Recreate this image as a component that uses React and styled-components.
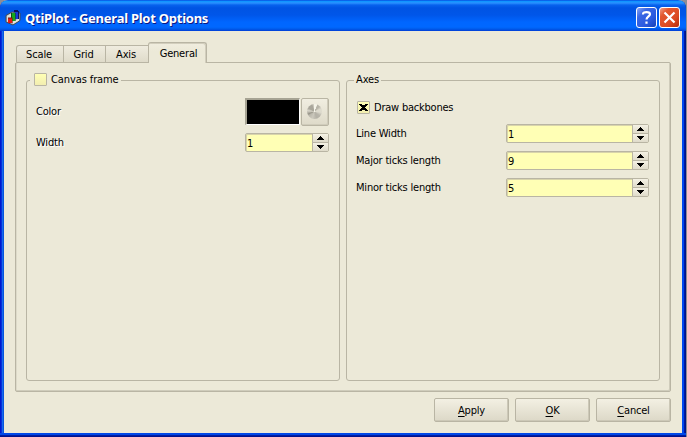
import React from 'react';
import styled, { createGlobalStyle, css } from 'styled-components';

const LINE = '#b9b5a4';

const GlobalStyle = createGlobalStyle`
  * { box-sizing: border-box; }
  body { margin: 0; background: #8e8d96; overflow: hidden; }
  button, input { font: inherit; color: inherit; }
`;

const Window = styled.div`
  width: 686px;
  height: 437px;
  display: flex;
  flex-direction: column;
  border-radius: 8px 8px 0 0;
  overflow: hidden;
  background: linear-gradient(90deg, #0019cf 0 1px, #0831d9 1px 2px, #166aee 2px 3px, #0855dd 3px 4px, transparent 4px calc(100% - 4px), #0048f1 calc(100% - 4px) calc(100% - 2px), #001ba0 calc(100% - 2px) calc(100% - 1px), #00138c calc(100% - 1px)), #ece9d8;
  color: #000;
  font: 11px/14px 'DejaVu Sans Condensed', 'DejaVu Sans', sans-serif;
  font-stretch: condensed;
`;

const TitleBar = styled.header`
  height: 31px;
  flex: none;
  display: flex;
  align-items: center;
  padding: 4px 6px 0 5px;
  background: linear-gradient(180deg, #0831d9 0, #0997ff 1px, #2a90ff 3px, #0762ee 5px, #0054e3 8px, #0056e9 15px, #0066ff 22px, #0068ff 27px, #005bea 29px, #003dd7 31px);
`;

const Title = styled.h1`
  flex: 1;
  margin: 0 0 0 4px;
  color: #fff;
  font: bold 13px/18px 'Noto Sans', sans-serif;
  font-stretch: normal;
  letter-spacing: -0.25px;
  text-shadow: 1px 1px 0 #0a1883;
  white-space: nowrap;
`;

const CaptionButton = styled.button`
  width: 21px;
  height: 21px;
  margin: 0 0 0 2px;
  padding: 0;
  border: 1px solid #fff;
  border-radius: 3px;
  display: grid;
  place-items: center;
  background: ${p => p.$close
    ? 'linear-gradient(135deg, #f0a08b 0, #e2582f 25%, #dc4b22 65%, #b52c0d 100%)'
    : 'linear-gradient(135deg, #8aa6f5 0, #3a67e4 28%, #2b5be0 65%, #1742b8 100%)'};
  color: #fff;
`;

const Body = styled.main`
  flex: 1;
  padding: 11px 11px 0 11px;
  margin: 0 4px;
`;

const Tabs = styled.nav`
  height: 21px;
  margin-bottom: -1px;
  padding-left: 1px;
  display: flex;
  align-items: flex-end;
`;

const Tab = styled.button`
  width: ${p => p.$width}px;
  height: 17px;
  margin: 0 0 1px;
  padding: 1px 2px 0 0;
  border: 1px solid ${LINE};
  border-left-width: ${p => (p.$first ? 1 : 0)}px;
  border-bottom: 0;
  border-radius: ${p => (p.$first ? '3px 0 0 0' : '0')};
  background: linear-gradient(#efecdf, #dfdbca);
  letter-spacing: -0.15px;
  ${p => p.$active && css`
    height: 21px;
    margin: 0 0 0 -1px;
    padding: 1px 0 0 2px;
    letter-spacing: -0.2px;
    border: 1px solid ${LINE};
    border-bottom: 0;
    border-radius: 3px 3px 0 0;
    box-shadow: inset -1px 1px 0 #d2cebd;
    background: linear-gradient(#f0eddf, #ece9d8 8px);
  `}
`;

const Pane = styled.section`
  width: 656px;
  height: 330px;
  padding: 10px;
  border: 1px solid ${LINE};
  border-radius: 2px;
  box-shadow: inset -1px -1px 0 #cfccbb, inset 1px 0 0 #dddac9;
  display: grid;
  grid-template-columns: 314px 314px;
  column-gap: 6px;
`;

const Group = styled.fieldset`
  min-width: 0;
  height: 308px;
  margin: 0;
  padding: 0;
  border: 1px solid ${LINE};
  border-radius: 3px;
`;

const GroupTitle = styled.legend`
  height: 14px;
  margin-left: ${p => p.$inset}px;
  padding: 0 2px 0 ${p => p.$lead}px;
  display: flex;
  align-items: center;
  gap: 4px;
  letter-spacing: -0.1px;
`;

const Rows = styled.div`
  padding: 11px 10px 0 9px;
  display: flex;
  flex-direction: column;
  gap: 8px;
`;

const Row = styled.div`
  height: 19px;
  display: flex;
  align-items: center;
  justify-content: space-between;
  ${p => p.$color && css`
    height: 28px;
    margin-bottom: -1px;
  `}
  ${p => p.$check && css`
    margin-bottom: -1px;
  `}
`;

const Label = styled.span`
  white-space: nowrap;
  letter-spacing: -0.2px;
  ${p => p.$raised && css`
    text-shadow: 1px 1px 0 #fff;
  `}
`;

const CheckLabel = styled.label`
  display: flex;
  align-items: center;
  gap: 4px;
  padding-left: 1px;
  letter-spacing: -0.22px;
`;

const CheckBox = styled.span`
  width: 13px;
  height: 13px;
  border: 1px solid ${LINE};
  border-radius: 1px;
  display: grid;
  place-items: center;
  background: linear-gradient(#ffffb5, #f2eeb0);
`;

const LegendCheckBox = styled(CheckBox)`
  margin-top: -1px;
`;

const ColorControls = styled.div`
  display: flex;
  align-items: flex-start;
`;

const Swatch = styled.div`
  width: 55px;
  height: 27px;
  border: 2px solid;
  border-width: 2px 1px 1px 2px;
  border-color: #a6a393 #fff #fff #a6a393;
  background: #000;
  background-clip: padding-box;
`;

const Picker = styled.button`
  width: 28px;
  height: 28px;
  margin: 0 0 0 1px;
  padding: 0;
  border: 1px solid ${LINE};
  border-radius: 2px;
  box-shadow: inset -1px -1px 0 #d0ccbb;
  display: grid;
  place-items: center;
  background: linear-gradient(#f1eee1, #dedac9);
`;

const Wheel = styled.span`
  width: 15px;
  height: 15px;
  margin: -1px 0 0 -2px;
  border-radius: 50%;
  background: conic-gradient(#f5f4e9 0 5%, #b8b5a9 7% 12%, #dedbce 19% 27%, #b8b5aa 36%, #b5b2a7 45%, #cbc8bc 55%, #bab7ab 65%, #989589 69%, #dad7cb 77%, #a9a69a 83%, #aaa79c 94%, #e6e3d7);
`;

const Spin = styled.div`
  width: ${p => p.$width}px;
  height: 19px;
  border: 1px solid ${LINE};
  border-radius: 2px;
  display: grid;
  grid-template-columns: 1fr 16px;
  background: #ffffb5;
  box-shadow: inset 1px 1px 0 #d8d4ab;
`;

const SpinValue = styled.span`
  padding: 2px 0 0 1px;
  line-height: 15px;
`;

const Steps = styled.div`
  display: grid;
  grid-template-rows: 8px 8px;
  row-gap: 1px;
  border-left: 1px solid ${LINE};
  background: ${LINE};
`;

const Step = styled.button`
  min-width: 0;
  padding: 0;
  border: 0;
  display: grid;
  place-items: center;
  background: linear-gradient(#f4f1e4, #dfdbca);
`;

const Actions = styled.footer`
  height: 24px;
  margin-top: 6px;
  display: flex;
  justify-content: flex-end;
  gap: 6px;
`;

const ActionButton = styled.button`
  width: 75px;
  height: 24px;
  padding: 1px 0 0;
  border: 1px solid ${LINE};
  border-radius: 2px;
  box-shadow: inset -1px -1px 0 #ccc8b7;
  background: linear-gradient(#f3f0e3, #dcd8c7);
  letter-spacing: -0.2px;
`;

const Mnemonic = styled.u`
  text-underline-offset: 2px;
`;

const BottomEdge = styled.div`
  height: 4px;
  flex: none;
  background: linear-gradient(#0048e8 0 2px, #001da4 2px 3px, #00138c 3px);
`;

const IconSvg = styled.svg`
  flex: none;
`;

function AppIcon() {
  return (
    <IconSvg width="16" height="17" viewBox="0 0 16 17">
      <path d="M1 6.500 7 3l8 1v7.500L8 16l-7-3z" fill="#b4b9bc" stroke="#3f4a55" />
      <path d="M2 7 7 4v7l-5 2z" fill="#d9dcda" />
      <path d="m8 12.500 6-3v2L8 15z" fill="#e5e6de" />
      <path d="M10 2h3v8h-3z" fill="#1739d6" />
      <path d="M9 1h4v1h1v8h-1V3H9z" fill="#09125f" />
      <path d="M7 4h3v8H7z" fill="#14a81b" />
      <path d="M6 4h1v5H6zM10 4h.6v8H10z" fill="#075319" />
      <path d="M3 9h4v5H3z" fill="#e91b12" />
      <path d="M3 8.500h4.500V14H7V9.500H3z" fill="#78130b" />
    </IconSvg>
  );
}

function SpinBox({ value, width }) {
  return (
    <Spin $width={width}>
      <SpinValue>{value}</SpinValue>
      <Steps>
        <Step aria-label="Increase">
          <svg width="7" height="4" viewBox="0 0 7 4" shapeRendering="crispEdges"><path d="M3 0h1v1h1v1h1v1h1v1H0V3h1V2h1V1h1z" /></svg>
        </Step>
        <Step aria-label="Decrease">
          <svg width="7" height="4" viewBox="0 0 7 4" shapeRendering="crispEdges"><path d="M0 0h7v1H6v1H5v1H4v1H3V3H2V2H1V1H0z" /></svg>
        </Step>
      </Steps>
    </Spin>
  );
}

export default function App() {
  return (
    <>
      <GlobalStyle />
      <Window>
        <TitleBar>
          <AppIcon />
          <Title>QtiPlot - General Plot Options</Title>
          <CaptionButton aria-label="Help">
            <svg width="15" height="17" viewBox="0 0 15 17" fill="none" stroke="currentColor" strokeWidth="2.2"><path d="M4 5.500V5c0-2.600 7-2.600 7 .2 0 2-3.500 2.400-3.500 5.300M7.500 12.500v2.300" /></svg>
          </CaptionButton>
          <CaptionButton $close aria-label="Close">
            <svg width="13" height="13" viewBox="0 0 13 13" stroke="currentColor" strokeWidth="2.2"><path d="m1.500 1.500 10 10m0-10-10 10" /></svg>
          </CaptionButton>
        </TitleBar>
        <Body>
          <Tabs>
            <Tab $width={48} $first>Scale</Tab>
            <Tab $width={42}>Grid</Tab>
            <Tab $width={43}>Axis</Tab>
            <Tab $width={59} $active>General</Tab>
          </Tabs>
          <Pane>
            <Group>
              <GroupTitle $inset={3} $lead={4}><LegendCheckBox />Canvas frame</GroupTitle>
              <Rows>
                <Row $color>
                  <Label $raised>Color</Label>
                  <ColorControls>
                    <Swatch />
                    <Picker aria-label="Choose color"><Wheel /></Picker>
                  </ColorControls>
                </Row>
                <Row><Label $raised>Width</Label><SpinBox value="1" width={84} /></Row>
              </Rows>
            </Group>
            <Group>
              <GroupTitle $inset={7} $lead={2}>Axes</GroupTitle>
              <Rows>
                <Row $check>
                  <CheckLabel>
                    <CheckBox>
                      <svg width="9" height="9" viewBox="0 0 9 9" shapeRendering="crispEdges"><path d="M1 1h2v1h3V1h2v2H7v1H6v1h1v1h1v2H6V7H3v1H1V6h1V5h1V4H2V3H1zM0 1h1v1H0zM8 1h1v1H8zM0 7h1v1H0zM8 7h1v1H8z" /></svg>
                    </CheckBox>
                    Draw backbones
                  </CheckLabel>
                </Row>
                <Row><Label>Line Width</Label><SpinBox value="1" width={143} /></Row>
                <Row><Label>Major ticks length</Label><SpinBox value="9" width={143} /></Row>
                <Row><Label>Minor ticks length</Label><SpinBox value="5" width={143} /></Row>
              </Rows>
            </Group>
          </Pane>
          <Actions>
            <ActionButton><Mnemonic>A</Mnemonic>pply</ActionButton>
            <ActionButton><Mnemonic>O</Mnemonic>K</ActionButton>
            <ActionButton><Mnemonic>C</Mnemonic>ancel</ActionButton>
          </Actions>
        </Body>
        <BottomEdge />
      </Window>
    </>
  );
}
